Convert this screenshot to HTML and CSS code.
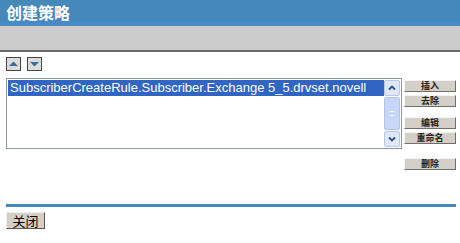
FILE: index.html
```html
<!DOCTYPE html>
<html>
<head>
<meta charset="utf-8">
<link rel="stylesheet" href="styles.css">
</head>
<body>
<div class="header">
  <div class="title">创建策略</div>
  <div class="strip"></div>
</div>
<div class="band"></div>
<div class="content">
  <div class="arrows">
    <span class="arrow"><svg width="13" height="12" viewBox="0 0 13 12"><path d="M2 8 L6.5 3.5 L11 8 Z" fill="#3d6a9e"/></svg></span>
    <span class="arrow"><svg width="13" height="12" viewBox="0 0 13 12"><path d="M2 4 L6.5 8.5 L11 4 Z" fill="#3d6a9e"/></svg></span>
  </div>
  <div class="main">
    <div class="listbox">
      <div class="items">
        <div class="item sel">SubscriberCreateRule.Subscriber.Exchange 5_5.drvset.novell</div>
      </div>
      <div class="scroll">
        <div class="sbtn"><svg width="14" height="14" viewBox="0 0 14 14"><path d="M4 8.5 L7 5.5 L10 8.5" fill="none" stroke="#2f4f8a" stroke-width="1.8"/></svg></div>
        <div class="track"><div class="thumb"><span class="grip"></span></div></div>
        <div class="sbtn"><svg width="14" height="14" viewBox="0 0 14 14"><path d="M4 5.5 L7 8.5 L10 5.5" fill="none" stroke="#2f4f8a" stroke-width="1.8"/></svg></div>
      </div>
    </div>
    <div class="side">
      <div class="btn">插入</div>
      <div class="btn">去除</div>
      <div class="btn gap">编辑</div>
      <div class="btn">重命名</div>
      <div class="btn gap2">删除</div>
    </div>
  </div>
  <div class="rule"></div>
  <div class="close">关闭</div>
</div>
</body>
</html>
```
FILE: styles.css
```css
html, body { margin: 0; padding: 0; background: #fff; }
body { font-family: "Liberation Sans", "Noto Sans CJK SC", sans-serif; width: 460px; height: 243px; overflow: hidden; }
.header { background: #4588ba; height: 26px; }
.title { color: #fff; font-weight: bold; font-size: 16px; line-height: 20px; padding: 2px 0 0 6px; height: 18px; font-family: "Noto Sans CJK SC", sans-serif; }
.strip { height: 6px; background: #4a8ac4; margin-top: 1px; }
.band { height: 24px; background: #cccccc; border-bottom: 2px solid #6b6b6b; }
.content { padding: 0 4px 0 6px; }
.arrows { display: flex; gap: 6px; padding-top: 5px; height: 15px; }
.arrow { width: 13px; height: 12px; border: 1px solid #444; background: #dcdcdc; display: flex; }
.main { display: flex; margin-top: 6px; }
.listbox { width: 394px; height: 69px; border: 1px solid #8c97a3; display: flex; }
.items { flex: 1; padding: 1px 0 0 1px; }
.item { font-size: 13px; line-height: 16px; height: 16px; padding-left: 2px; color: #000; white-space: nowrap; }
.item.sel { background: #3165c4; color: #fff; }
.scroll { width: 16px; display: flex; flex-direction: column; padding: 1px 1px 1px 0; }
.sbtn { height: 14px; border: 1px solid #b9c8e8; border-radius: 2px; background: #dfe8fb; display: flex; align-items: center; justify-content: center; }
.track { flex: 1; background: #f3f6fd; display: flex; padding: 1px 0; }
.thumb { flex: 1; border: 1px solid #b4c5ec; border-radius: 2px; background: #c8d6f8; display: flex; align-items: center; justify-content: center; }
.grip { width: 6px; height: 5px; border-top: 1px solid #eef2fd; border-bottom: 1px solid #eef2fd; box-sizing: border-box; }
.side { display: flex; flex-direction: column; margin-left: 2px; padding-top: 2px; }
.btn { width: 50px; height: 10px; margin-bottom: 3px; background: #d4d0c8; border: 1px solid; border-color: #f4f4f4 #6f6f6f #6f6f6f #f4f4f4; font-size: 9px; font-weight: bold; line-height: 10px; text-align: center; font-family: "Noto Sans CJK SC", sans-serif; color: #222; }
.btn.gap { margin-top: 7px; }
.btn.gap2 { margin-top: 11px; }
.rule { height: 3px; background: #4588ba; margin-top: 31px; width: 450px; }
.close { display: inline-block; vertical-align: top; margin-top: 5px; width: 37px; height: 15px; background: #d4d0c8; border: 1px solid; border-color: #f0f0f0 #555 #555 #f0f0f0; font-size: 13px; line-height: 15px; text-align: center; font-family: "Noto Sans CJK SC", sans-serif; }
```
